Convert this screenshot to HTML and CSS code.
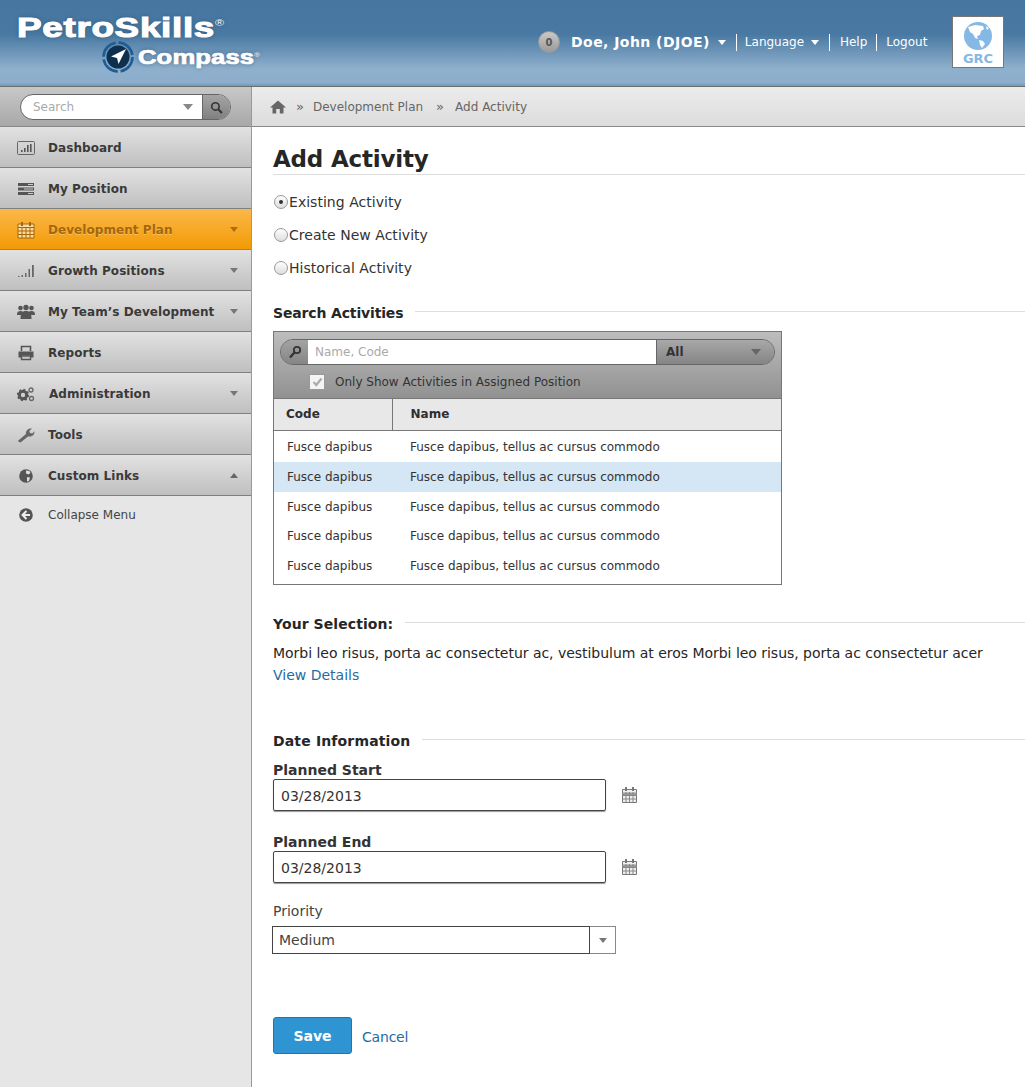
FILE: index.html
```html
<!DOCTYPE html>
<html>
<head>
  <title>Add Activity</title>
  <link rel="stylesheet" href="styles.css">
</head>
<body>
  <div class="header">
    <div class="logo">
      <div class="logo-top">PetroSkills<sup>®</sup></div>
      <div class="logo-sub">
        <svg width="32" height="32" viewBox="0 0 32 32">
          <circle cx="16" cy="16" r="14.5" fill="none" stroke="#1f5c93" stroke-width="2.6" stroke-dasharray="20 2.8"/>
          <circle cx="16" cy="16" r="11.5" fill="#0f2f4f"/>
          <path d="M24 8 L9 15.5 L15 17 L16.5 23 Z" fill="#fff"/>
        </svg>
        <span class="logo-word">Compass<sup>®</sup></span>
      </div>
    </div>
    <div class="user-nav">
      <span class="badge">0</span>
      <span class="user-name">Doe, John (DJOE)</span>
      <span class="caret-w first"></span>
      <a class="sep-link">Language <span class="caret-w"></span></a>
      <a class="sep-link help">Help</a>
      <a class="sep-link logout">Logout</a>
    </div>
    <div class="grc">
      <svg width="30" height="30" viewBox="0 0 30 30">
        <circle cx="15" cy="15" r="14" fill="#85b8e4"/>
        <path d="M5 6 L12 4 L20 5 L21 8 L18 10 L17 14 L14 15 L15 18 L12 17 L10 13 L7 11 Z M16 19 L20 20 L22 23 L19 27 L17 24 Z M23 5 L26 7 L24 9 Z" fill="#fff"/>
      </svg>
      <span>GRC</span>
    </div>
  </div>

  <div class="main">
    <div class="sidebar">
      <div class="side-search">
        <div class="search-pill">
          <span class="search-text">Search</span>
          <span class="caret-g"></span>
          <span class="search-btn">
            <svg width="13" height="13" viewBox="0 0 12 12"><circle cx="5" cy="5" r="3.4" fill="none" stroke="#333" stroke-width="1.5"/><path d="M7.6 7.6 L11 11" stroke="#333" stroke-width="2"/></svg>
          </span>
        </div>
      </div>

      <div class="nav-item">
        <svg class="nav-icon" viewBox="0 0 18 14"><rect x=".5" y=".5" width="17" height="13" rx="1" fill="none" stroke="#666"/><path d="M4 9h1.6v2H4zM7 7h1.6v4H7zM10 4h1.6v7H10zM13 3h1.6v8H13z" fill="#555"/></svg>
        <span>Dashboard</span>
      </div>
      <div class="nav-item">
        <svg class="nav-icon" viewBox="0 0 18 14"><path d="M1 1h16v3H1zM1 5.5h16v3H1zM1 10h16v3H1z" fill="#555"/><path d="M11 2h5v1h-5zM7 6.500h9v1H7zM11 11h5v1h-5z" fill="#ccc"/></svg>
        <span>My Position</span>
      </div>
      <div class="nav-item active">
        <svg class="nav-icon tall" viewBox="0 0 18 18"><path d="M1 3h16v14H1z" fill="#fbdca0" stroke="#a8660a"/><path d="M1 6.500h16M1 10h16M1 13.500h16M5 6v11M9 6v11M13 6v11" stroke="#a8660a" fill="none"/><path d="M4 1h2v4H4zM12 1h2v4h-2z" fill="#a8660a"/></svg>
        <span>Development Plan</span>
        <span class="caret-d"></span>
      </div>
      <div class="nav-item">
        <svg class="nav-icon" viewBox="0 0 18 14"><path d="M1 12h1.500v1H1zM4.500 11H6v2H4.500zM8 9h1.500v4H8zM11.500 5H13v8h-1.500zM15 1h1.800v12H15z" fill="#666"/></svg>
        <span>Growth Positions</span>
        <span class="caret-d"></span>
      </div>
      <div class="nav-item">
        <svg class="nav-icon tall" viewBox="0 0 18 16"><circle cx="3.500" cy="4" r="2.300" fill="#555"/><circle cx="14.500" cy="4" r="2.300" fill="#555"/><circle cx="9" cy="3.500" r="2.700" fill="#555"/><path d="M0 11c0-3 1-4 3.500-4s3.500 1 3.500 4zM11 11c0-3 1-4 3.500-4s3.500 1 3.500 4z" fill="#555"/><path d="M3.500 15c0-6 1.500-8 5.500-8s5.500 2 5.500 8z" fill="#555"/></svg>
        <span>My Team’s Development</span>
        <span class="caret-d"></span>
      </div>
      <div class="nav-item">
        <svg class="nav-icon" viewBox="0 0 18 16"><path d="M4.500 6V1.500h9V6" fill="none" stroke="#555" stroke-width="1.600"/><path d="M1.500 6.500h15v6h-3v-2h-9v2h-3z" fill="#555"/><path d="M4.500 11h9v3.500h-9z" fill="none" stroke="#555" stroke-width="1.400"/></svg>
        <span>Reports</span>
      </div>
      <div class="nav-item admin">
        <svg class="nav-icon" viewBox="0 0 18 16"><circle cx="6" cy="9" r="3.700" fill="none" stroke="#555" stroke-width="3"/><circle cx="6" cy="9" r="5.400" fill="none" stroke="#555" stroke-width="1.500" stroke-dasharray="2 2.200"/><circle cx="14" cy="4" r="2" fill="none" stroke="#666" stroke-width="1.300"/><circle cx="14.500" cy="12.500" r="2" fill="none" stroke="#666" stroke-width="1.300"/></svg>
        <span>Administration</span>
        <span class="caret-d"></span>
      </div>
      <div class="nav-item">
        <svg class="nav-icon" viewBox="0 0 18 16"><path d="M2 15 L1 13.800 L9 7 C8.600 3.600 11 1 15 1.500 L12.300 4 L13 6 L15.300 6.500 L17.500 4.200 C17.500 8 15 10 11 9.400 L3.500 15.500 Z" fill="#666"/></svg>
        <span>Tools</span>
      </div>
      <div class="nav-item">
        <svg class="nav-icon" viewBox="0 0 18 16"><circle cx="9" cy="8" r="6.800" fill="#555"/><path d="M9 2.500l3.500.5 1 2-2 1.500-2.500-1zM10 9l3 .5-1 3.500-2 .5z" fill="#ddd"/></svg>
        <span>Custom Links</span>
        <span class="caret-u"></span>
      </div>
      <div class="collapse-row">
        <svg class="nav-icon" viewBox="0 0 18 16"><circle cx="9" cy="8" r="6.800" fill="#555"/><path d="M9.500 4 L5.500 8 L9.500 12 M6 8 H13" fill="none" stroke="#eee" stroke-width="2"/></svg>
        <span>Collapse Menu</span>
      </div>
    </div>

    <div class="content">
      <div class="crumbs">
        <svg width="16" height="14" viewBox="0 0 16 14"><path d="M8 .500 L16 7.500 H13.500 V13.500 H9.800 V9 H6.200 V13.500 H2.500 V7.500 H0 Z" fill="#666"/></svg>
        <span class="crumb-sep">»</span>
        <span>Development Plan</span>
        <span class="crumb-sep second">»</span>
        <span>Add Activity</span>
      </div>

      <div class="page">
        <h1>Add Activity</h1>

        <div class="radios">
          <label class="radio-row"><span class="radio on"></span>Existing Activity</label>
          <label class="radio-row"><span class="radio"></span>Create New Activity</label>
          <label class="radio-row"><span class="radio"></span>Historical Activity</label>
        </div>

        <div class="section-title search-title"><span>Search Activities</span></div>

        <div class="picker">
          <div class="picker-top">
            <div class="picker-bar">
              <span class="picker-icon">
                <svg width="14" height="14" viewBox="0 0 14 14"><circle cx="9" cy="5" r="3.200" fill="none" stroke="#333" stroke-width="1.800"/><path d="M6.500 7.500 L2 12.500" stroke="#333" stroke-width="2.400"/></svg>
              </span>
              <span class="picker-input">Name, Code</span>
              <span class="picker-all">All<span class="caret-d"></span></span>
            </div>
            <label class="picker-check">
              <span class="checkbox">
                <svg width="11" height="10" viewBox="0 0 11 10"><path d="M1.500 5 L4.300 8 L9.500 1.500" fill="none" stroke="#aaa" stroke-width="2.200"/></svg>
              </span>
              Only Show Activities in Assigned Position
            </label>
          </div>
          <table class="grid">
            <thead>
              <tr><th class="col-code">Code</th><th>Name</th></tr>
            </thead>
            <tbody>
              <tr><td>Fusce dapibus</td><td>Fusce dapibus, tellus ac cursus commodo</td></tr>
              <tr class="selected"><td>Fusce dapibus</td><td>Fusce dapibus, tellus ac cursus commodo</td></tr>
              <tr><td>Fusce dapibus</td><td>Fusce dapibus, tellus ac cursus commodo</td></tr>
              <tr><td>Fusce dapibus</td><td>Fusce dapibus, tellus ac cursus commodo</td></tr>
              <tr><td>Fusce dapibus</td><td>Fusce dapibus, tellus ac cursus commodo</td></tr>
            </tbody>
          </table>
        </div>

        <div class="section-title selection-title"><span>Your Selection:</span></div>
        <p class="selection-text">Morbi leo risus, porta ac consectetur ac, vestibulum at eros Morbi leo risus, porta ac consectetur acer</p>
        <a class="link details">View Details</a>

        <div class="section-title date-title"><span>Date Information</span></div>

        <div class="field-label">Planned Start</div>
        <div class="date-row">
          <div class="date-input">03/28/2013</div>
          <svg class="cal" viewBox="0 0 15 16"><path d="M.5 2.500h14v13H.5z" fill="#eee" stroke="#777"/><path d="M.5 5.500h14v3h-14z" fill="#999"/><path d="M.5 8.500h14M.5 12h14M4 5v10M7.500 5v10M11 5v10" stroke="#888" fill="none"/><path d="M3 0h2v4H3zM10 0h2v4h-2z" fill="#777"/></svg>
        </div>

        <div class="field-label end-label">Planned End</div>
        <div class="date-row">
          <div class="date-input">03/28/2013</div>
          <svg class="cal" viewBox="0 0 15 16"><path d="M.5 2.500h14v13H.5z" fill="#eee" stroke="#777"/><path d="M.5 5.500h14v3h-14z" fill="#999"/><path d="M.5 8.500h14M.5 12h14M4 5v10M7.500 5v10M11 5v10" stroke="#888" fill="none"/><path d="M3 0h2v4H3zM10 0h2v4h-2z" fill="#777"/></svg>
        </div>

        <div class="priority-label">Priority</div>
        <div class="select">
          <span class="select-value">Medium</span>
          <span class="select-arrow"><span class="caret-d"></span></span>
        </div>

        <div class="actions">
          <button class="save">Save</button>
          <a class="link cancel">Cancel</a>
        </div>
      </div>
    </div>
  </div>
</body>
</html>
```

FILE: styles.css
```css
* { box-sizing: border-box; }
html, body { margin: 0; padding: 0; }
body { font-family: "DejaVu Sans", Verdana, sans-serif; font-size: 13px; color: #333; background: #fff; width: 1025px; height: 1087px; overflow: hidden; }
sup { vertical-align: baseline; }

/* header */
.header { height: 87px; display: flex; background: linear-gradient(#4777a1 0, #4979a2 40%, #8fb0cd 80%, #8cadcb 96%, #6f9abd 100%); border-bottom: 1px solid #6d6d6d; color: #fff; }
.logo { width: 520px; padding: 16px 0 0 17px; text-shadow: 0 0 4px rgba(20, 50, 80, .5); }
.logo-top { font-family: "Liberation Sans", Arial, sans-serif; font-weight: bold; font-size: 27px; line-height: 25px; letter-spacing: .5px; -webkit-text-stroke: 1px #fff; transform: scaleX(1.365); transform-origin: left; white-space: nowrap; }
.logo-top sup { font-size: 9px; position: relative; top: -11px; -webkit-text-stroke: 0; font-weight: normal; }
.logo-sub { display: flex; align-items: center; margin: -6px 0 0 85px; height: 32px; }
.logo-word { font-family: "Liberation Sans", Arial, sans-serif; font-weight: bold; font-size: 20px; letter-spacing: .1px; -webkit-text-stroke: .7px #fff; margin-left: 4px; transform: scaleX(1.28); transform-origin: left; white-space: nowrap; }
.logo-word sup { font-size: 6px; position: relative; top: -7px; -webkit-text-stroke: 0; font-weight: normal; }
.user-nav { display: flex; align-items: center; height: 16px; margin-top: 34px; width: 432px; padding-left: 18px; font-size: 12px; white-space: nowrap; }
.badge { width: 22px; height: 22px; border-radius: 50%; background: linear-gradient(#c9c9c9, #9a9a9a); border: 1px solid #999; color: #555; font-size: 10px; font-weight: bold; display: flex; align-items: center; justify-content: center; }
.user-name { font-weight: bold; font-size: 14px; margin-left: 11px; letter-spacing: .45px; }
.caret-w { display: inline-block; border-left: 4px solid transparent; border-right: 4px solid transparent; border-top: 5px solid #fff; vertical-align: 1px; margin-left: 3px; }
.caret-w.first { margin-left: 8px; margin-right: 10px; }
.sep-link { border-left: 1px solid #fff; height: 17px; line-height: 16px; padding-left: 8px; }
.help { margin-left: 10px; padding-left: 10px; }
.logout { margin-left: 9px; padding-left: 9px; }
.grc { width: 52px; height: 52px; margin-top: 16px; background: #fff; border: 1px solid #777; display: flex; flex-direction: column; align-items: center; padding-top: 4px; color: #85b8e4; font-weight: bold; font-size: 13px; line-height: 14px; }
.grc svg { flex: none; margin-bottom: 1px; }

/* layout */
.main { display: flex; height: 1000px; }
.sidebar { width: 252px; flex: none; background: #e6e6e6; border-right: 1px solid #999; height: 1000px; }

.side-search { height: 40px; padding: 7px 0 0 20px; background: linear-gradient(#c8c8c8, #a8a8a8); border-bottom: 1px solid #888; }
.search-pill { width: 211px; height: 26px; border: 1px solid #666; border-radius: 13px; background: #fff; display: flex; align-items: center; overflow: hidden; position: relative; }
.search-text { color: #aaa; font-size: 12px; padding-left: 12px; flex: 1; }
.caret-g { border-left: 5px solid transparent; border-right: 5px solid transparent; border-top: 6px solid #888; margin-right: 9px; }
.search-btn { width: 28px; height: 24px; background: linear-gradient(#a5a5a5, #808080); border-left: 1px solid #666; display: flex; align-items: center; justify-content: center; }

.nav-item { height: 41px; display: flex; align-items: center; padding: 1px 0 0 17px; background: linear-gradient(#e2e2e2, #bfbfbf); border-bottom: 1px solid #808080; font-weight: bold; font-size: 12px; letter-spacing: .06px; color: #3a3a3a; position: relative; white-space: nowrap; }
.nav-icon { width: 18px; height: 16px; margin-right: 13px; flex: none; }
.nav-icon.tall { height: 18px; }
.admin span { margin-left: 1px; }
.nav-item .caret-d, .nav-item .caret-u { position: absolute; right: 13px; top: 18px; }
.caret-d { display: inline-block; border-left: 4px solid transparent; border-right: 4px solid transparent; border-top: 5px solid #777; }
.caret-u { display: inline-block; border-left: 4px solid transparent; border-right: 4px solid transparent; border-bottom: 5px solid #666; }
.active { background: linear-gradient(#fbb84a, #f39a05); color: #a2670f; border-bottom-color: #c47c05; text-shadow: 0 1px 0 rgba(255, 220, 150, .5); }
.active .caret-d { border-top-color: #a8700f; }
.collapse-row { height: 38px; display: flex; align-items: center; padding-left: 17px; font-size: 12px; color: #444; }

/* content */
.content { flex: 1; min-width: 0; }
.crumbs { height: 40px; background: linear-gradient(#ececec, #dcdcdc); border-bottom: 1px solid #888; display: flex; align-items: center; padding-left: 18px; font-size: 12px; color: #666; white-space: nowrap; }
.crumb-sep { margin: 0 9px 0 10px; color: #666; font-size: 13px; }
.crumb-sep.second { margin: 0 11px 0 13px; }
.page { padding-left: 21px; }
h1 { margin: 0; height: 48px; padding-top: 16px; font-size: 23px; line-height: 32px; font-weight: bold; color: #262626; border-bottom: 1px solid #ddd; letter-spacing: -.2px; white-space: nowrap; }

.radios { padding-top: 10px; }
.radio-row { display: flex; align-items: center; height: 33px; font-size: 14px; letter-spacing: .03px; color: #333; }
.radio { width: 14px; height: 14px; margin: 1px 1px 0; border-radius: 50%; border: 1px solid #999; background: linear-gradient(#fff, #ddd); display: flex; align-items: center; justify-content: center; }
.radio.on::after { content: ""; width: 4px; height: 4px; border-radius: 50%; background: #333; }

.section-title { display: flex; align-items: center; font-weight: bold; font-size: 14px; color: #262626; white-space: nowrap; letter-spacing: .15px; }
.section-title::after { content: ""; flex: 1; height: 1px; background: #ddd; margin: 0 0 4px 12px; }
.search-title { margin-top: 19px; height: 20px; letter-spacing: -.15px; }

.picker { width: 509px; height: 254px; margin-top: 8px; border: 1px solid #777; }
.picker-top { height: 67px; background: linear-gradient(#bdbdbd, #919191); border-bottom: 1px solid #777; padding: 7px 6px 0 6px; }
.picker-bar { display: flex; height: 26px; border: 1px solid #666; border-radius: 13px; overflow: hidden; }
.picker-icon { width: 27px; background: linear-gradient(#a3a3a3, #858585); display: flex; align-items: center; justify-content: center; }
.picker-input { width: 348px; background: #fff; color: #aaa; font-size: 12px; line-height: 24px; padding-left: 7px; }
.picker-all { flex: 1; background: linear-gradient(#a8a8a8, #848484); border-left: 1px solid #666; font-size: 12px; font-weight: bold; color: #333; line-height: 24px; padding-left: 9px; display: flex; align-items: center; justify-content: space-between; padding-right: 13px; }
.picker-all .caret-d { border-left-width: 5px; border-right-width: 5px; border-top-width: 6px; border-top-color: #666; }
.picker-check { display: flex; align-items: center; margin: 9px 0 0 29px; font-size: 12px; color: #333; white-space: nowrap; }
.checkbox { width: 16px; height: 16px; background: #f4f4f4; border: 1px solid #999; display: flex; align-items: center; justify-content: center; margin-right: 10px; }

.grid { width: 100%; border-collapse: collapse; font-size: 12px; color: #333; table-layout: fixed; }
.grid th { height: 31px; background: #e8e8e8; border-bottom: 1px solid #777; text-align: left; font-weight: bold; padding: 0 0 0 18px; color: #2e2e2e; }
.grid th.col-code { width: 118px; border-right: 1px solid #777; padding-left: 12px; }
.grid td { height: 29.700px; padding: 0 0 0 18px; white-space: nowrap; }
.grid td:first-child { padding-left: 13px; }
.grid tbody tr:first-child td { height: 32px; padding-top: 2px; }
.selected td { background: #d5e6f4; }

.selection-title { margin-top: 29px; height: 20px; letter-spacing: .08px; }
.selection-text { margin: 9px 0 0; font-size: 14px; line-height: 20px; color: #262626; letter-spacing: -.03px; white-space: nowrap; }
.link { color: #1f6da3; }
.details { display: block; font-size: 14px; line-height: 20px; margin-top: 2px; }

.date-title { margin-top: 46px; height: 20px; }
.field-label { font-weight: bold; font-size: 14px; color: #333; line-height: 18px; margin-top: 10px; }
.end-label { margin-top: 22px; }
.date-row { display: flex; align-items: center; }
.date-input { width: 333px; height: 32px; border: 1px solid #444; border-radius: 2px; box-shadow: 0 1px 1px #999; font-size: 14px; line-height: 33px; padding-left: 7px; color: #333; }
.cal { width: 15px; height: 16px; margin-left: 16px; }
.priority-label { font-size: 14px; line-height: 18px; margin-top: 19px; color: #444; }
.select { display: flex; width: 344px; height: 28px; margin: 6px 0 0 -1px; }
.select-value { flex: 1; border: 1px solid #444; font-size: 14px; line-height: 26px; padding-left: 6px; color: #444; }
.select-arrow { width: 26px; border: 1px solid #888; border-left: 0; display: flex; align-items: center; justify-content: center; }
.actions { display: flex; align-items: center; margin-top: 63px; }
.save { width: 79px; height: 37px; padding: 0; background: #2e95d2; border: 1px solid #2377a8; border-radius: 3px; color: #fff; font-family: "DejaVu Sans", Verdana, sans-serif; font-size: 14px; font-weight: bold; }
.cancel { margin: 2px 0 0 10px; font-size: 14px; letter-spacing: -.2px; }
```
